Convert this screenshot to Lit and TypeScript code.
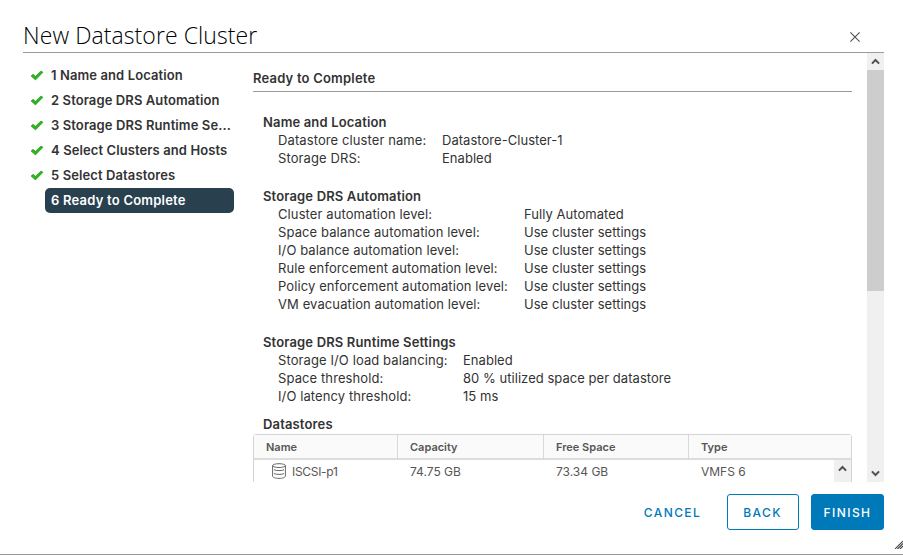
import { LitElement, html, css, svg } from "lit";
import { customElement } from "lit/decorators.js";
import { classMap } from "lit/directives/class-map.js";

type Field = [label: string, value: string];
interface Section {
  title: string;
  kind: string;
  fields: Field[];
}

const STEPS = [
  "1 Name and Location",
  "2 Storage DRS Automation",
  "3 Storage DRS Runtime Se...",
  "4 Select Clusters and Hosts",
  "5 Select Datastores",
  "6 Ready to Complete",
];

const SECTIONS: Section[] = [
  {
    title: "Name and Location",
    kind: "name",
    fields: [
      ["Datastore cluster name:", "Datastore-Cluster-1"],
      ["Storage DRS:", "Enabled"],
    ],
  },
  {
    title: "Storage DRS Automation",
    kind: "automation",
    fields: [
      ["Cluster automation level:", "Fully Automated"],
      ["Space balance automation level:", "Use cluster settings"],
      ["I/O balance automation level:", "Use cluster settings"],
      ["Rule enforcement automation level:", "Use cluster settings"],
      ["Policy enforcement automation level:", "Use cluster settings"],
      ["VM evacuation automation level:", "Use cluster settings"],
    ],
  },
  {
    title: "Storage DRS Runtime Settings",
    kind: "runtime",
    fields: [
      ["Storage I/O load balancing:", "Enabled"],
      ["Space threshold:", "80 % utilized space per datastore"],
      ["I/O latency threshold:", "15 ms"],
    ],
  },
];

const check = html`<svg class="check" viewBox="0 0 14 11" width="14" height="11">
  ${svg`<path d="M1 6.1 3.1 4.2 5.4 6.3 11 1 13 2.3 5.5 9.9Z" fill="#2fb41f" stroke="#1f9616" stroke-width=".6" stroke-linejoin="round"/>`}
</svg>`;

const chevronUp = html`<svg viewBox="0 0 9 7" width="9" height="7">
  <path d="M.9 5.6 4.5 2 8.1 5.6" fill="none" stroke="#505050" stroke-width="2" />
</svg>`;

const chevronDown = html`<svg viewBox="0 0 9 7" width="9" height="7">
  <path d="M.9 1.4 4.5 5 8.1 1.4" fill="none" stroke="#505050" stroke-width="2" />
</svg>`;

@customElement("app-root")
export class AppRoot extends LitElement {
  static styles = css`
    :host {
      display: block;
      position: relative;
      box-sizing: border-box;
      width: 903px;
      height: 555px;
      overflow: hidden;
      background: #fff;
      border-bottom: 1px solid #999;
      color: #333;
      font: 400 13px/18px Inter, "Open Sans", sans-serif;
      letter-spacing: 0;
    }
    * {
      box-sizing: border-box;
    }
    svg {
      display: block;
      flex: none;
    }
    .header {
      display: flex;
      justify-content: space-between;
      margin: 0 19px 0 23px;
      height: 53px;
      padding-top: 20px;
      border-bottom: 1px solid #9a9a9a;
    }
    h1 {
      margin: 0;
      font-family: "Open Sans", sans-serif;
      font-size: 23px;
      line-height: 30px;
      font-weight: 300;
      color: #000;
      letter-spacing: 0.08px;
      white-space: nowrap;
    }
    .close {
      margin: 12px 24px 0 0;
    }
    .body {
      display: flex;
      height: 429px;
      margin-right: 19px;
    }
    .steps {
      width: 253px;
      padding: 10px 19px 0 27px;
    }
    .step {
      display: flex;
      align-items: center;
      height: 25px;
      font-weight: 600;
      letter-spacing: 0.1px;
    }
    .mark {
      width: 18px;
      padding-left: 3px;
    }
    .label {
      flex: 1;
      height: 25px;
      padding: 0 0 0 6px;
      line-height: 25px;
      border-radius: 5px;
      white-space: nowrap;
    }
    .current .label {
      background: #29404f;
      color: #fff;
      letter-spacing: 0.22px;
    }
    .page {
      width: 599px;
      height: 429px;
      overflow: hidden;
    }
    .page-title {
      height: 39px;
      padding-top: 16px;
      font-weight: 600;
      letter-spacing: 0.2px;
      border-bottom: 1px solid #9a9a9a;
      margin-bottom: 21px;
    }
    .section {
      padding-left: 10px;
      margin-bottom: 20px;
    }
    .section.runtime {
      margin-bottom: 10px;
    }
    .section-title {
      font-weight: 600;
      letter-spacing: 0.15px;
    }
    .field {
      display: flex;
      padding-left: 15px;
      white-space: nowrap;
    }
    .key {
      letter-spacing: 0.1px;
    }
    .value {
      letter-spacing: 0.04px;
    }
    .name .key {
      width: 164px;
    }
    .automation .key {
      width: 246px;
    }
    .runtime .key {
      width: 185px;
    }
    .list-title {
      padding-left: 10px;
      font-weight: 600;
      letter-spacing: 0.15px;
      margin-bottom: 1px;
    }
    .table {
      border: 1px solid #d4d4d4;
      border-radius: 3px 3px 0 0;
      height: 90px;
      font-size: 12px;
      color: #565656;
    }
    .row {
      display: grid;
      grid-template-columns: 144px 146px 145px 1fr;
    }
    .head {
      height: 25px;
      background: #fafafa;
      border-bottom: 2px solid #dcdcdc;
      font-size: 11px;
      font-weight: 600;
    }
    .head .cell {
      line-height: 24px;
      padding-left: 12px;
      border-right: 1px solid #d8d8d8;
    }
    .head .cell:last-child {
      border-right: 0;
    }
    .rows {
      display: flex;
    }
    .rows .row {
      flex: 1;
      height: 24px;
      line-height: 23px;
    }
    .rows .cell {
      display: flex;
      padding-left: 12px;
      white-space: nowrap;
    }
    .rows .cell:first-child {
      padding-left: 18px;
      letter-spacing: -0.3px;
    }
    .disk {
      margin: 3px 6px 0 0;
    }
    .list-bar {
      display: flex;
      justify-content: center;
      width: 17px;
      height: 64px;
      margin-left: -17px;
      padding-top: 5px;
      background: #f0f0f0;
    }
    .bar {
      display: flex;
      flex-direction: column;
      width: 17px;
      margin-left: 15px;
      background: #f0f0f0;
    }
    .arrow {
      display: flex;
      justify-content: center;
      align-items: center;
      height: 17px;
    }
    .thumb {
      height: 221px;
      background: #cdcdcd;
      margin-bottom: auto;
    }
    .footer {
      display: flex;
      justify-content: flex-end;
      gap: 12px;
      margin: 12px 19px 0 0;
    }
    .button {
      height: 36px;
      border: 1px solid #0079b8;
      border-radius: 3px;
      background: #fff;
      color: #0079b8;
      font: 500 12px/34px Inter, sans-serif;
      letter-spacing: 1.4px;
      text-align: center;
      padding: 1px 0 0;
    }
    .cancel {
      width: 86px;
      padding-left: 1px;
      border-color: transparent;
    }
    .back {
      width: 72px;
      padding-right: 1px;
    }
    .finish {
      width: 73px;
      background: #0079b8;
      color: #fff;
    }
    .grip {
      position: absolute;
      right: 0;
      bottom: 5px;
    }
  `;

  render() {
    return html`
      <div class="header">
        <h1>New Datastore Cluster</h1>
        <svg class="close" viewBox="0 0 10 10" width="10" height="10">
          <path d="M.4.4 9.6 9.6M9.6.4.4 9.6" stroke="#505050" stroke-width="1.1" />
        </svg>
      </div>
      <div class="body">
        <div class="steps">
          ${STEPS.map((name, i) => {
            const current = i === STEPS.length - 1;
            return html`<div class=${classMap({ step: true, current })}>
              <span class="mark">${current ? "" : check}</span>
              <span class="label">${name}</span>
            </div>`;
          })}
        </div>
        <div class="page">
          <div class="page-title">Ready to Complete</div>
          ${SECTIONS.map(
            (s) => html`<div class="section ${s.kind}">
              <div class="section-title">${s.title}</div>
              ${s.fields.map(
                ([key, value]) => html`<div class="field">
                  <span class="key">${key}</span><span class="value">${value}</span>
                </div>`,
              )}
            </div>`,
          )}
          <div class="list-title">Datastores</div>
          <div class="table">
            <div class="row head">
              ${["Name", "Capacity", "Free Space", "Type"].map(
                (c) => html`<div class="cell">${c}</div>`,
              )}
            </div>
            <div class="rows">
              <div class="row">
                <div class="cell">
                  <svg class="disk" viewBox="0 0 14 16" width="14" height="16">
                    <path
                      d="M.6 2.6v10.6c0 1.2 2.8 2.2 6.4 2.2s6.4-1 6.4-2.2V2.6M2 6.8c1.2.5 3 .8 5 .8s3.8-.3 5-.8M2 10.6c1.2.5 3 .8 5 .8s3.8-.3 5-.8"
                      fill="none"
                      stroke="#666"
                    />
                    <ellipse cx="7" cy="2.6" rx="6.4" ry="1.9" fill="none" stroke="#666" />
                  </svg>
                  <span>ISCSI-p1</span>
                </div>
                <div class="cell">74.75 GB</div>
                <div class="cell">73.34 GB</div>
                <div class="cell">VMFS 6</div>
              </div>
              <div class="list-bar">${chevronUp}</div>
            </div>
          </div>
        </div>
        <div class="bar">
          <div class="arrow">${chevronUp}</div>
          <div class="thumb"></div>
          <div class="arrow">${chevronDown}</div>
        </div>
      </div>
      <div class="footer">
        <button class="button cancel">CANCEL</button>
        <button class="button back">BACK</button>
        <button class="button finish">FINISH</button>
      </div>
      <svg class="grip" viewBox="0 0 8 8" width="8" height="8">
        <path d="M0 8 8 0M2.5 8 8 2.5M5 8 8 5" stroke="#444" stroke-width="1.1" />
      </svg>
    `;
  }
}
